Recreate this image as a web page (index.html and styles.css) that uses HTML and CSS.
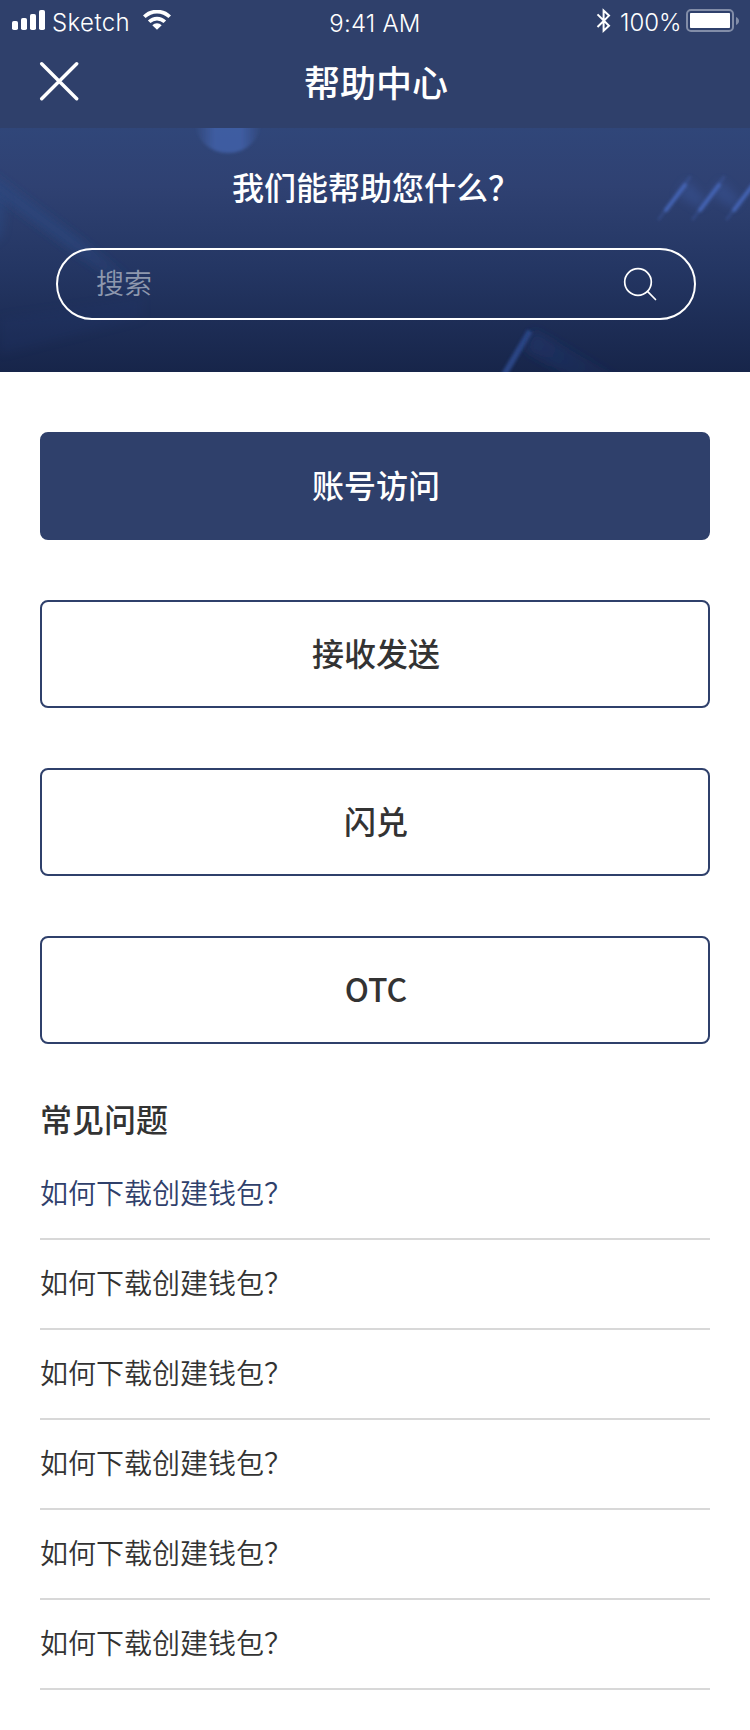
FILE: index.html
```html
<!DOCTYPE html>
<html lang="zh-CN">
<head>
<meta charset="utf-8">
<title>帮助中心</title>
<link rel="stylesheet" href="styles.css">
</head>
<body>
<div class="page">
  <header class="top">
    <div class="status">
      <div class="status-left">
        <svg class="signal" width="33" height="20" viewBox="0 0 33 20" fill="#fff"><rect y="11" width="6" height="9" rx="1.8"/><rect x="9" y="8" width="6" height="12" rx="1.8"/><rect x="18" y="4" width="6" height="16" rx="1.8"/><rect x="27" width="6" height="20" rx="1.8"/></svg>
        <span class="carrier">Sketch</span>
        <svg class="wifi" width="28" height="20" viewBox="0 0 28 20"><g fill="none" stroke="#fff" stroke-width="3.7"><path d="M1.3 6.8a18 18 0 0 1 25.4 0"/><path d="M6.2 11.8a11 11 0 0 1 15.6 0"/></g><path d="M9.3 15.2a6.7 6.7 0 0 1 9.4 0L14 19.8z" fill="#fff"/></svg>
      </div>
      <span class="clock">9:41 AM</span>
      <div class="status-right">
        <svg class="bluetooth" width="16" height="26" viewBox="0 0 16 26" fill="none" stroke="#fff" stroke-width="2"><path d="M1.5 6.4L13 17.8 7.6 22.7V2.6L13 7.6 1.5 19"/></svg>
        <span class="percent">100%</span>
        <svg class="battery" width="54" height="24" viewBox="0 0 54 24"><rect x="1" y="1" width="46" height="21" rx="4" fill="none" stroke="#828da8" stroke-width="2"/><rect x="4" y="4" width="40" height="15" rx=".8" fill="#fff"/><path d="M50 8c4 1.500 4 6.500 0 8z" fill="#828da8"/></svg>
      </div>
    </div>
    <div class="nav">
      <svg class="close" width="40" height="40" viewBox="0 0 40 40" fill="none" stroke="#fff" stroke-width="3.4" stroke-linecap="round"><path d="M2.700 2.700l35 35M37.700 2.700l-35 35"/></svg>
      <h1 class="nav-title">帮助中心</h1>
    </div>
  </header>

  <section class="hero">
    <svg class="hero-art" width="750" height="244" viewBox="0 0 750 244">
      <defs>
        <filter id="soft" x="-50%" y="-50%" width="200%" height="200%"><feGaussianBlur stdDeviation="5"/></filter>
        <filter id="fine" x="-60%" y="-30%" width="220%" height="160%"><feGaussianBlur stdDeviation="1.500"/></filter>
        <linearGradient id="orb" x1="0" x2="1"><stop offset="0" stop-color="#4262ab" stop-opacity="0"/><stop offset=".3" stop-color="#4262ab" stop-opacity=".8"/><stop offset=".7" stop-color="#4262ab" stop-opacity=".8"/><stop offset="1" stop-color="#4262ab" stop-opacity="0"/></linearGradient>
        <linearGradient id="beam" gradientUnits="userSpaceOnUse" x1="0" y1="60" x2="140" y2="170"><stop offset="0" stop-color="#2b4b87" stop-opacity=".5"/><stop offset=".5" stop-color="#2b4b87" stop-opacity=".5"/><stop offset="1" stop-color="#2b4b87" stop-opacity="0"/></linearGradient>
        <linearGradient id="ray" gradientUnits="userSpaceOnUse" x1="532" y1="200" x2="620" y2="250"><stop offset="0" stop-color="#20376f" stop-opacity=".55"/><stop offset="1" stop-color="#20376f" stop-opacity=".1"/></linearGradient>
      </defs>
      <ellipse cx="228" cy="-6" rx="33" ry="31" fill="url(#orb)" filter="url(#fine)"/>
      <path d="M-10 44L140 156 140 172 -10 62z" fill="url(#beam)" filter="url(#soft)"/>
      <path d="M-12 58L6 72 2 108-12 118z" fill="#2c4d88" opacity=".4" filter="url(#soft)"/>
      <path d="M0 190L142 170V190L0 226z" fill="#20376f" opacity=".2" filter="url(#soft)"/>
      <g fill="#3c5ba5" opacity=".38" filter="url(#soft)"><path d="M687 52l20 20-8 8-22-13zM721 52l20 20-8 8-22-13z"/></g>
      <g fill="none" stroke="#4464b4" stroke-width="4" stroke-linecap="round" filter="url(#fine)"><path d="M685 57L666 82M719 57L700 82M753 57L734 82"/><path stroke-width="2.500" opacity=".35" d="M690 49L659 91M724 49L693 91M758 49L727 91"/></g>
      <path d="M530 203L501 252" fill="none" stroke="#2d4b8f" stroke-width="6" opacity=".85" filter="url(#fine)"/>
      <path d="M533 202L630 255H580L525 222z" fill="url(#ray)" filter="url(#soft)"/>
    </svg>
    <h2 class="hero-title">我们能帮助您什么？</h2>
    <div class="search">
      <span class="placeholder">搜索</span>
      <svg class="search-icon" width="34" height="34" viewBox="0 0 34 34" fill="none" stroke="#fff" stroke-width="1.700"><circle cx="15" cy="15" r="13.300"/><path d="M24.500 24.300L32.500 32.500" stroke-linecap="round"/></svg>
    </div>
  </section>

  <main class="content">
    <nav class="topics">
      <a class="topic active">账号访问</a>
      <a class="topic">接收发送</a>
      <a class="topic">闪兑</a>
      <a class="topic">OTC</a>
    </nav>
    <h2 class="faq-title">常见问题</h2>
    <ul class="faq">
      <li class="question current">如何下载创建钱包？</li>
      <li class="question">如何下载创建钱包？</li>
      <li class="question">如何下载创建钱包？</li>
      <li class="question">如何下载创建钱包？</li>
      <li class="question">如何下载创建钱包？</li>
      <li class="question">如何下载创建钱包？</li>
    </ul>
  </main>
</div>
</body>
</html>
```

FILE: styles.css
```css
* { box-sizing: border-box; }
body { margin: 0; background: #fff; color: #333; font-family: "Noto Sans CJK SC", sans-serif; }
h1, h2, ul { margin: 0; padding: 0; font-weight: 500; }
svg { display: block; flex: none; }
.page { width: 750px; height: 1730px; overflow: hidden; }

.top { height: 128px; background: #2f406b; color: #fff; }
.status { display: grid; grid-template-columns: 1fr auto 1fr; height: 40px; font: 350 24px/28px Inter, sans-serif; }
.status-left { display: flex; align-items: flex-start; padding: 10px 0 0 12px; }
.carrier { width: 78px; margin: -1px 0 0 7px; letter-spacing: 0.4px; }
.wifi { margin-left: 13px; }
.clock { padding-top: 10px; letter-spacing: 0.2px; }
.status-right { display: flex; justify-content: flex-end; align-items: flex-start; padding: 9px 10px 0 0; }
.bluetooth { margin: -1px 8px 0 0; }
.percent { width: 62px; margin-right: 4px; }
.nav { display: grid; grid-template-columns: 1fr auto 1fr; height: 88px; }
.close { margin: 21px 0 0 39px; }
.nav-title { padding: 15px 0 0 2px; font-size: 36px; line-height: 52px; }

.hero { display: grid; justify-items: center; align-content: start; height: 244px; color: #fff; background: linear-gradient(#304679, #2f4172 24%, #243663 58%, #17254a); overflow: hidden; position: relative; }
.hero-art { position: absolute; top: 0; left: 0; }
.hero-title { position: relative; margin-top: 34px; padding-left: 2px; font-size: 32px; line-height: 48px; }
.search { position: relative; display: flex; justify-content: space-between; width: 640px; height: 72px; margin: 38px 0 0 2px; padding: 0 37px 0 38px; border: 2px solid #fff; border-radius: 36px; }
.placeholder { padding-top: 11px; font-size: 28px; line-height: 42px; font-weight: 350; color: #8e98ae; }
.search-icon { margin-top: 17px; }

.content { padding: 60px 40px 0; }
.topics { display: grid; gap: 60px; }
.topic { height: 108px; border: 2px solid #2f406b; border-radius: 8px; padding: 26px 0 0 2px; font-size: 32px; line-height: 48px; font-weight: 500; text-align: center; }
.topic.active { background: #2f406b; color: #fff; }
.faq-title { margin-top: 50px; font-size: 32px; line-height: 48px; }
.faq { list-style: none; margin-top: 8px; }
.question { height: 90px; padding-top: 21px; border-bottom: 2px solid #d8d8d8; font-size: 28px; line-height: 42px; font-weight: 350; }
.current { color: #2f406b; }
```
